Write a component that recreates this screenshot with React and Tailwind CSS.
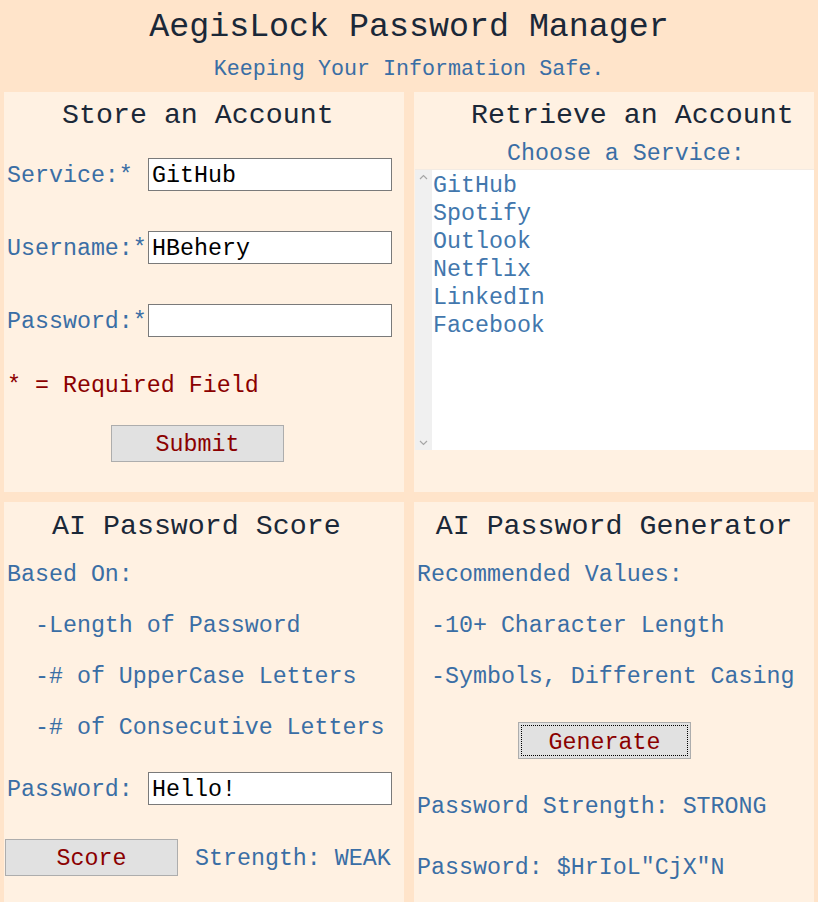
import React from 'react';

const mono = { fontFamily: '"Courier New", "Nimbus Mono PS", FreeMono, "Liberation Mono", monospace' };

function Field({ label, value }) {
  return (
    <div className="flex items-center h-[33px]">
      <span className="w-[141px] shrink-0 pt-[4px] text-[#3a6ea5]">{label}</span>
      <div className="w-[244px] h-[33px] border border-[#7a7a7a] bg-white pl-[3px] pt-[4px] leading-[27px] text-black">
        {value}
      </div>
    </div>
  );
}

function Button({ children, className = '', focused = false }) {
  return (
    <div
      className={`h-[37px] w-[173px] border border-[#adadad] bg-[#e1e1e1] flex items-center justify-center text-[#8b0000] ${className}`}
    >
      {focused ? (
        <div className="w-[167px] h-[31px] border border-dotted border-black flex items-center justify-center">
          <span className="pt-[5px]">{children}</span>
        </div>
      ) : (
        <span className="pt-[4px]">{children}</span>
      )}
    </div>
  );
}

export default function App() {
  const services = ['GitHub', 'Spotify', 'Outlook', 'Netflix', 'LinkedIn', 'Facebook'];

  return (
    <div className="min-h-screen bg-[#ffe4ca] text-[23.3px] overflow-hidden" style={mono}>
      <header className="h-[92px] pt-[2px] flex flex-col items-center">
        <h1 className="text-[33.3px] leading-[50px] text-[#1b2838]">AegisLock Password Manager</h1>
        <p className="text-[21.7px] leading-[36px] text-[#3a6ea5]">Keeping Your Information Safe.</p>
      </header>

      <div className="grid grid-cols-[400px_400px] gap-[10px] px-[4px]">
        {/* Store */}
        <section className="h-[400px] bg-[#fff1e2] pl-[3px]">
          <h2 className="h-[44px] pt-[2px] leading-[42px] text-[28.3px] text-[#1b2838] pl-[55px]">Store an Account</h2>
          <div className="mt-[22px] flex flex-col gap-[40px]">
            <Field label="Service:*" value="GitHub" />
            <Field label="Username:*" value="HBehery" />
            <Field label="Password:*" value="" />
          </div>
          <p className="mt-[33px] pt-[4px] leading-[24px] text-[#8b0000]">* = Required Field</p>
          <Button className="mt-[27px] ml-[104px]">Submit</Button>
        </section>

        {/* Retrieve */}
        <section className="h-[400px] bg-[#fff1e2]">
          <h2 className="h-[44px] pt-[2px] leading-[42px] text-[28.3px] text-[#1b2838] pl-[57px]">Retrieve an Account</h2>
          <p className="h-[33px] pt-[5px] leading-[27px] text-[#3a6ea5] pl-[93px]">Choose a Service:</p>
          <div className="ml-[1px] h-[281px] flex border-t border-[#f3ebe3]">
            <div className="w-[17px] bg-[#f0f0f0] flex flex-col items-center justify-between py-[4px] text-[#a6a6a6]">
              <svg width="9" height="6" viewBox="0 0 9 6" fill="none" stroke="currentColor" strokeWidth="1.2">
                <path d="M1 5 L4.5 1.5 L8 5" />
              </svg>
              <svg width="9" height="6" viewBox="0 0 9 6" fill="none" stroke="currentColor" strokeWidth="1.2">
                <path d="M1 1 L4.5 4.5 L8 1" />
              </svg>
            </div>
            <ul className="flex-1 bg-white pl-[1px] pt-[2px]">
              {services.map((s) => (
                <li key={s} className="leading-[28px] text-[#4277ad]">
                  {s}
                </li>
              ))}
            </ul>
          </div>
        </section>

        {/* Score */}
        <section className="h-[400px] bg-[#fff1e2] pl-[3px]">
          <h2 className="h-[46px] pt-[2px] leading-[44px] text-[28.3px] text-[#1b2838] pl-[45px]">AI Password Score</h2>
          <div className="text-[#3a6ea5] whitespace-pre">
            <p className="pt-[4px] leading-[47px]">Based On:</p>
            <p className="pt-[4px] leading-[47px]">  -Length of Password</p>
            <p className="pt-[4px] leading-[47px]">  -# of UpperCase Letters</p>
            <p className="pt-[4px] leading-[47px]">  -# of Consecutive Letters</p>
          </div>
          <div className="mt-[20px]">
            <Field label="Password:" value="Hello!" />
          </div>
          <div className="mt-[33px] -ml-[2px] flex items-center gap-[17px]">
            <Button className="h-[36px]">Score</Button>
            <span className="pt-[4px] text-[#3a6ea5]">Strength: WEAK</span>
          </div>
        </section>

        {/* Generate */}
        <section className="h-[400px] bg-[#fff1e2] pl-[3px]">
          <h2 className="h-[46px] pt-[2px] leading-[44px] text-[28.3px] text-[#1b2838] text-center pr-[3px]">AI Password Generator</h2>
          <div className="text-[#3a6ea5] whitespace-pre">
            <p className="pt-[4px] leading-[47px]">Recommended Values:</p>
            <p className="pt-[4px] leading-[47px]"> -10+ Character Length</p>
            <p className="pt-[4px] leading-[47px]"> -Symbols, Different Casing</p>
          </div>
          <Button focused className="mt-[21px] ml-[101px]">Generate</Button>
          <p className="mt-[32px] pt-[4px] leading-[24px] text-[#3a6ea5]">Password Strength: STRONG</p>
          <p className="mt-[33px] pt-[4px] leading-[24px] text-[#3a6ea5]">Password: $HrIoL"CjX"N</p>
        </section>
      </div>
    </div>
  );
}
